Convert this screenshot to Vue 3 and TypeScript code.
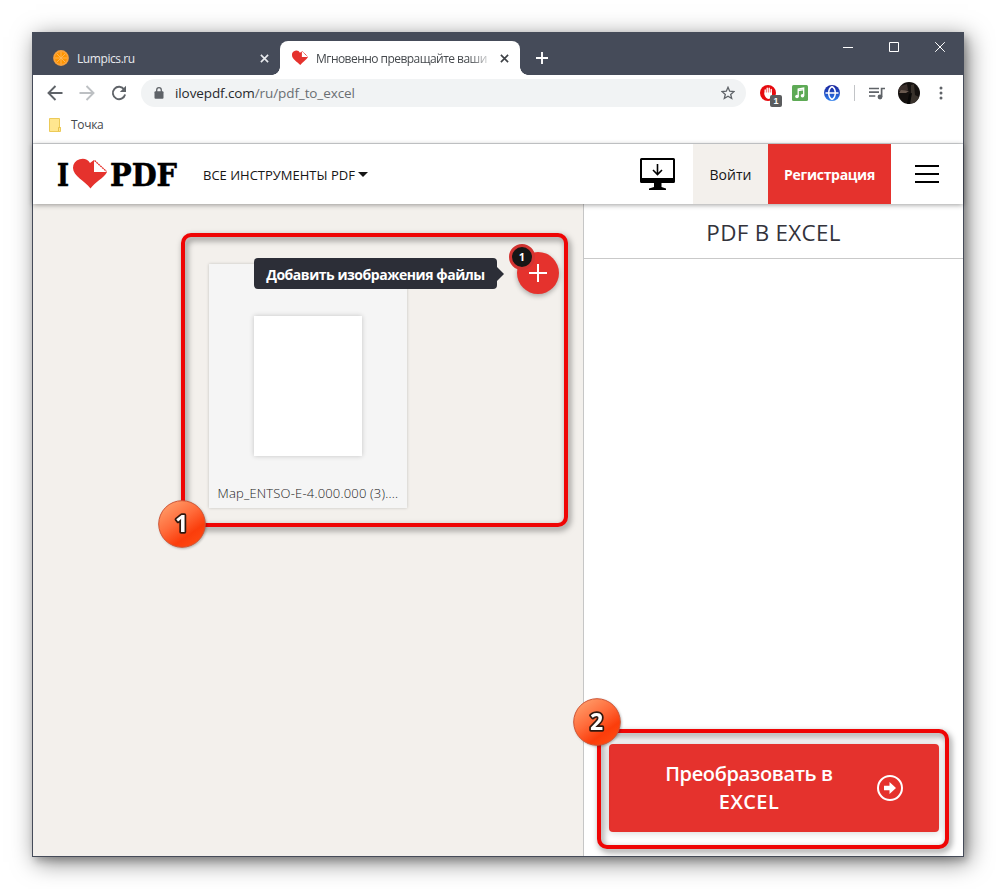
<script setup lang="ts">
interface Tab {
  title: string
  icon: 'orange' | 'heart'
  active: boolean
}

const tabs: Tab[] = [
  { title: 'Lumpics.ru', icon: 'orange', active: false },
  { title: 'Мгновенно превращайте ваши', icon: 'heart', active: true },
]
const spokes: number[] = [0, 45, 90, 135]
const fileName = 'Map_ENTSO-E-4.000.000 (3)....'
const fileCount = 1
</script>

<template>
  <div class="desktop">
    <div class="window">
      <div class="tabstrip">
        <div v-for="tab in tabs" :key="tab.title" class="tab" :class="{ active: tab.active }">
          <svg v-if="tab.icon === 'orange'" class="favicon" viewBox="0 0 16 16">
            <circle cx="8" cy="8" r="7.9" fill="#f9a13a" />
            <circle cx="8" cy="8" r="6.1" fill="#ff9500" />
            <path v-for="s in spokes" :key="s" d="M8 2v12" stroke="#fdb75c" stroke-width=".9" :transform="`rotate(${s} 8 8)`" />
          </svg>
          <svg v-else class="favicon" viewBox="0 0 34 30">
            <path d="M17.500 30C12 23 0 18 0 9A9 9 0 0 1 17 4L21 1V13H34C31 19 22 24 17.500 30Z" fill="#e5322d" />
            <path d="M22 1L33 12" stroke="#e5322d" stroke-width="2" stroke-dasharray="3 1" />
          </svg>
          <span class="tab-title">{{ tab.title }}</span>
          <svg class="tab-close" viewBox="0 0 10 10"><path d="M1 1L9 9M9 1L1 9" /></svg>
        </div>
        <svg class="new-tab" viewBox="0 0 12 12"><path d="M6 0V12M0 6H12" stroke="#fff" stroke-width="1.9" /></svg>
        <div class="win-controls">
          <svg viewBox="0 0 12 12"><path d="M1 6.500H11" /></svg>
          <svg viewBox="0 0 12 12"><path d="M1.500 1.500H10.500V10.500H1.500Z" /></svg>
          <svg viewBox="0 0 12 12"><path d="M1.200 1.200L10.800 10.800M10.800 1.200L1.200 10.800" /></svg>
        </div>
      </div>

      <div class="toolbar">
        <div class="nav">
          <svg viewBox="0 0 16 16"><path d="M15.500 8H2M8.500 1L1.500 8L8.500 15" stroke="#5f6368" /></svg>
          <svg viewBox="0 0 16 16"><path d="M.5 8H14M7.500 1L14.500 8L7.500 15" stroke="#bdc0c3" /></svg>
          <svg viewBox="0 0 16 16">
            <path d="M13.200 4.500A6.200 6.200 0 1 0 14.100 9.500" stroke="#5f6368" />
            <path d="M15 .8V7H8.800Z" fill="#5f6368" />
          </svg>
        </div>
        <div class="omnibox">
          <svg class="lock" viewBox="0 0 10 12">
            <rect x=".5" y="4.300" width="9" height="7.500" rx="1" fill="#5f6368" />
            <path d="M2.700 5V3a2.300 2.300 0 0 1 4.600 0V5" fill="none" stroke="#5f6368" stroke-width="1.300" />
          </svg>
          <span class="url"><b>ilovepdf.com</b>/ru/pdf_to_excel</span>
          <svg class="star" viewBox="0 0 14 14"><path d="M7 1.300L8.700 5.200L13 5.600L9.700 8.400L10.700 12.500L7 10.300L3.300 12.500L4.300 8.400L1 5.600L5.300 5.200Z" /></svg>
        </div>
        <div class="extensions">
          <div class="blocker">
            <svg viewBox="0 0 16 16">
              <circle cx="8" cy="8" r="8" fill="#e60a0e" />
              <path d="M5.200 9V5M7.200 8V3.200M9.200 8V3.200M11.200 8V4.500" stroke="#fff" stroke-width="1.400" stroke-linecap="round" />
              <path d="M4.500 7.500H12V12L9 14C7 14 5.500 12.500 4.500 10Z" fill="#fff" />
            </svg>
            <span class="blocker-count">1</span>
          </div>
          <svg class="note" viewBox="0 0 16 16">
            <rect width="16" height="16" rx="1.500" fill="#5eaa56" />
            <path d="M6.200 11.500V4L11.700 3V10.500M6.200 5.600L11.700 4.600" fill="none" stroke="#fff" stroke-width="1.300" />
            <circle cx="5" cy="11.500" r="1.800" fill="#fff" /><circle cx="10.500" cy="10.700" r="1.800" fill="#fff" />
          </svg>
          <svg class="globe" viewBox="0 0 16 16">
            <defs><linearGradient id="globe" x1="0" y1="0" x2="0" y2="1"><stop stop-color="#17209b" /><stop offset="1" stop-color="#2f80ed" /></linearGradient></defs>
            <circle cx="8" cy="8" r="8" fill="url(#globe)" />
            <path d="M1.500 8H14.500M8 1.500C3.600 4 3.600 12 8 14.500C12.400 12 12.400 4 8 1.500" fill="none" stroke="#fff" stroke-width="1.500" />
          </svg>
          <span class="divider"></span>
          <svg class="queue" viewBox="0 0 16 13">
            <path d="M0 1.500H10M0 5.200H10M0 9H6.300M12.600 10V1.500H16" fill="none" stroke="#5f6368" stroke-width="1.700" />
            <circle cx="11" cy="10" r="2.400" fill="#5f6368" />
          </svg>
          <svg class="avatar" viewBox="0 0 22 22">
            <defs><clipPath id="face"><circle cx="11" cy="11" r="11" /></clipPath></defs>
            <g clip-path="url(#face)">
              <rect width="22" height="22" fill="#15110f" />
              <path d="M0 5L9 2L10 8L5 10L0 9Z" fill="#3b302c" />
              <path d="M13 3L16 2L17 13L21 15V21H10L13 12Z" fill="#39322c" />
              <path d="M3 8L11 9L8 11L1 11Z" fill="#69594f" />
              <path d="M11 12L14 11L12 22H9Z" fill="#080706" />
            </g>
          </svg>
          <svg class="dots" viewBox="0 0 4 14"><circle cx="2" cy="2" r="1.500" /><circle cx="2" cy="7" r="1.500" /><circle cx="2" cy="12" r="1.500" /></svg>
        </div>
      </div>

      <div class="bookmarks">
        <svg viewBox="0 0 12 14">
          <path d="M.5 .5H10.500V9.500H11.500V13.500H.5Z" fill="#ffe68f" stroke="#ecca58" />
          <path d="M9.500 13V9.500H11.500" fill="none" stroke="#e8c34a" />
        </svg>
        <span>Точка</span>
      </div>

      <header class="site-header">
        <svg class="logo" viewBox="0 0 121 40">
          <text x="0" y="32" textLength="12" lengthAdjust="spacingAndGlyphs">I</text>
          <path d="M33.500 34.500C28 27 16 22 16 14A9.300 9.300 0 0 1 33 9L37 6V18H50C47 24 38 28 33.500 34.500Z" fill="#e5322d" />
          <path d="M37.500 6.500V17.500H49Z" fill="#fff" />
          <path d="M37.500 6.500L49.500 17.500" stroke="#e5322d" stroke-width="1.300" stroke-dasharray="2 .6" />
          <text x="53" y="32" textLength="67" lengthAdjust="spacingAndGlyphs">PDF</text>
        </svg>
        <span class="tools">ВСЕ ИНСТРУМЕНТЫ PDF</span>
        <span class="caret"></span>
        <svg class="monitor" viewBox="0 0 35 32">
          <path fill-rule="evenodd" d="M1.500 0H33.500Q35 0 35 1.500V23.500Q35 25 33.500 25H21.500V29L26 30.500V32H9V30.500L14 29V25H1.500Q0 25 0 23.500V1.500Q0 0 1.500 0ZM2 2V20H33V2Z" />
          <path d="M17.500 6V16M13 12L17.500 16.500L22 12" fill="none" stroke="#000" stroke-width="1.600" />
        </svg>
        <button class="login">Войти</button>
        <button class="register">Регистрация</button>
        <svg class="menu" viewBox="0 0 24 18"><path d="M0 1H24M0 9H24M0 17H24" stroke="#000" stroke-width="2" /></svg>
      </header>

      <main class="workspace">
        <section class="files">
          <div class="file-card">
            <div class="page"></div>
            <span class="file-name">{{ fileName }}</span>
          </div>
        </section>
        <aside class="sidebar">
          <h1><span>PDF В EXCEL</span></h1>
          <button class="convert">
            <span class="convert-label"><span>Преобразовать в</span><span>EXCEL</span></span>
            <svg viewBox="0 0 26 26">
              <circle cx="13" cy="13" r="12" fill="none" stroke="#fff" stroke-width="2" />
              <path d="M7 10.800H12.500V7L19 13L12.500 19V15.200H7Z" fill="#fff" />
            </svg>
          </button>
        </aside>
      </main>
    </div>

    <div class="tooltip"><span>Добавить изображения файлы</span></div>
    <div class="add"><svg viewBox="0 0 18 18"><path d="M9 0V18M0 9H18" stroke="#fff" stroke-width="2" /></svg></div>
    <div class="count">{{ fileCount }}</div>
    <div class="frame frame-files"></div>
    <div class="frame frame-convert"></div>
    <svg v-for="n in 2" :key="n" class="marker" :class="`marker-${n}`" viewBox="0 0 50 50">
      <defs>
        <linearGradient :id="`ball${n}`" x1=".1" y1="0" x2=".8" y2="1">
          <stop stop-color="#ffa471" /><stop offset=".45" stop-color="#ff6b3a" /><stop offset=".75" stop-color="#fb3d0b" /><stop offset="1" stop-color="#ff4b12" />
        </linearGradient>
      </defs>
      <circle cx="25" cy="25" r="23.300" :fill="`url(#ball${n})`" stroke="#cf5434" stroke-width="1" />
      <text x="24.500" y="33" text-anchor="middle">{{ n }}</text>
    </svg>
  </div>
</template>

<style>
body { margin: 0; background: #fff; }
</style>

<style scoped>
* { box-sizing: border-box; }
.desktop { position: relative; width: 996px; height: 889px; padding: 32px; overflow: hidden; background: #fff; font-family: "Open Sans", "Noto Sans", sans-serif; }
.window { display: flex; flex-direction: column; width: 932px; height: 825px; border: 1px solid #454b59; background: #fff; box-shadow: 4px 5px 22px rgba(0, 0, 0, .5), 3px 4px 7px rgba(0, 0, 0, .2); }
svg { display: block; flex: none; }
button { border: 0; padding: 0; margin: 0; }

.tabstrip { display: flex; height: 42px; flex: none; padding-left: 7px; background: #454b59; color: #e8eaee; }
.tab { position: relative; display: flex; align-items: center; width: 240px; height: 34px; margin-top: 8px; padding: 0 11px 0 13px; font-size: 12px; }
.tab.active { border-radius: 8px 8px 0 0; background: #fff; color: #45494d; padding-left: 12px; }
.tab.active::before, .tab.active::after { content: ""; position: absolute; bottom: 0; width: 8px; height: 8px; }
.tab.active::before { left: -8px; background: radial-gradient(circle at 0 0, #454b59 7.5px, #fff 8px); }
.tab.active::after { right: -8px; background: radial-gradient(circle at 100% 0, #454b59 7.5px, #fff 8px); }
.favicon { width: 16px; height: 16px; }
.tab-title { flex: 1; margin-left: 8px; overflow: hidden; white-space: nowrap; letter-spacing: -.42px; }
.active .tab-title { flex: none; width: 175px; letter-spacing: -.54px; -webkit-mask-image: linear-gradient(90deg, #000 152px, transparent 178px); }
.tab-close { width: 9px; height: 9px; margin-left: auto; fill: none; stroke: #e8eaee; stroke-width: 1.800; }
.active .tab-close { stroke: #3e4246; }
.new-tab { width: 12px; height: 12px; margin: 19px 0 0 16px; }
.win-controls { display: flex; gap: 34px; margin: 8px 17px 0 auto; }
.win-controls svg { width: 12px; height: 12px; fill: none; stroke: #fff; stroke-width: 1; }

.toolbar { display: flex; align-items: center; height: 36px; flex: none; padding: 0 20px 0 14px; }
.nav { display: flex; gap: 16px; }
.nav svg { width: 16px; height: 16px; fill: none; stroke-width: 1.900; }
.omnibox { display: flex; align-items: center; width: 605px; height: 28px; margin-left: 14px; padding: 0 11px 0 13px; border-radius: 14px; background: #f1f3f4; }
.lock { width: 10px; height: 12px; }
.url { margin-left: 11px; font-size: 13.500px; letter-spacing: -.1px; color: #6a6e72; white-space: nowrap; }
.url b { font-weight: 400; color: #27292c; }
.star { width: 14px; height: 14px; margin-left: auto; fill: none; stroke: #5f6368; stroke-width: 1.300; }
.extensions { display: flex; flex: 1; align-items: center; margin-left: 14px; }
.blocker { position: relative; }
.blocker svg, .note, .globe { width: 16px; height: 16px; }
.blocker-count { position: absolute; left: 10px; top: 10px; width: 12px; height: 12px; border-radius: 2px; background: #5a5c5e; color: #fff; font: bold 9px/12px "Liberation Sans", sans-serif; text-align: center; }
.note, .globe { margin-left: 16px; }
.divider { width: 1px; height: 16px; margin: 0 14px; background: #c2c4c7; }
.queue { width: 16px; height: 13px; }
.avatar { width: 22px; height: 22px; margin-left: 13px; }
.dots { width: 4px; height: 14px; margin-left: auto; fill: #5f6368; }

.bookmarks { display: flex; align-items: center; height: 33px; flex: none; padding: 0 0 5px 16px; border-bottom: 1px solid #d5d7d9; font-size: 12px; letter-spacing: -.3px; color: #45494d; }
.bookmarks svg { width: 12px; height: 14px; margin-right: 10px; }

.site-header { position: relative; z-index: 1; display: flex; align-items: center; height: 60px; flex: none; background: #fff; box-shadow: 0 1px 5px rgba(0, 0, 0, .38); font-family: "Open Sans", sans-serif; }
.logo { width: 121px; height: 40px; margin-left: 24px; overflow: visible; }
.logo text { font: bold 32px "DejaVu Serif", serif; fill: #000; stroke: #000; stroke-width: .6px; }
.tools { margin: 2px 0 0 25px; width: 153px; white-space: nowrap; font-size: 13px; color: #161616; }
.caret { width: 0; margin-left: 2px; border: 5px solid transparent; border-top-color: #161616; border-bottom: 0; }
.monitor { width: 35px; height: 32px; margin-left: auto; }
.login, .register { height: 60px; font-family: inherit; font-size: 14px; }
.login { width: 75px; margin-left: 18px; background: #f3f0ec; color: #161616; font-weight: 500; }
.register { width: 123px; background: #e5322d; color: #fff; font-weight: 700; letter-spacing: -.3px; }
.menu { width: 24px; height: 18px; margin: 0 24px; }

.workspace { display: flex; flex: 1; min-height: 0; }
.files { width: 550px; padding: 60px 0 0 176px; background: #f3f0ec; }
.file-card { display: flex; flex-direction: column; align-items: center; width: 198px; height: 244px; padding-top: 52px; background: #f5f5f5; box-shadow: 0 0 3px rgba(0, 0, 0, .2); }
.page { width: 108px; height: 140px; background: #fff; box-shadow: 0 0 5px rgba(0, 0, 0, .2); }
.file-name { margin-top: 28px; width: 181px; font: 300 13px/18px "Open Sans", sans-serif; letter-spacing: .18px; color: #222; white-space: nowrap; }
.sidebar { display: flex; flex: 1; flex-direction: column; border-left: 1px solid #c6c6c6; background: #fff; }
.sidebar h1 { display: flex; align-items: center; justify-content: center; height: 55px; margin: 0; padding-top: 3px; border-bottom: 1px solid #c9c9c9; font: 400 22.400px "Open Sans", sans-serif; letter-spacing: .3px; color: #33333b; }
.convert { display: flex; align-items: center; width: 330px; height: 88px; margin: auto 0 24px 25px; padding-right: 36px; border-radius: 4px; background: #e5322d; color: #fff; box-shadow: 0 0 9px rgba(0, 0, 0, .2); }
.convert-label { display: flex; flex: 1; flex-direction: column; align-items: center; padding-left: 12px; font: 600 20px/28px "Open Sans", sans-serif; letter-spacing: -.35px; white-space: nowrap; }
.convert-label span:last-child { letter-spacing: .4px; }
.convert svg { width: 26px; height: 26px; }

.tooltip { position: absolute; left: 254px; top: 258px; width: 243px; height: 31px; display: flex; align-items: center; justify-content: center; padding-top: 1px; border-radius: 4px; background: #2c2e37; color: #fff; font: 700 14px "Open Sans", sans-serif; letter-spacing: -.46px; white-space: nowrap; }
.tooltip::after { content: ""; position: absolute; left: 243px; top: 9px; border: 7px solid transparent; border-left-color: #2c2e37; border-right: 0; }
.add { position: absolute; left: 517px; top: 252px; display: flex; align-items: center; justify-content: center; width: 42px; height: 42px; border-radius: 50%; background: #e5322d; box-shadow: 0 2px 5px rgba(0, 0, 0, .3); }
.add svg { width: 18px; height: 18px; }
.count { position: absolute; left: 509px; top: 244px; width: 26px; height: 26px; border: 3px solid #d33432; border-radius: 50%; background: #161616; color: #fff; font: 700 11px/20px "Open Sans", sans-serif; text-align: center; }
.frame { position: absolute; border: 4px solid #ef0505; filter: drop-shadow(2px 3px 3px rgba(0, 0, 0, .5)); }
.frame-files { left: 181px; top: 233px; width: 387px; height: 294px; border-radius: 10px; }
.frame-convert { left: 597px; top: 729px; width: 352px; height: 120px; border-radius: 10px; }
.marker { position: absolute; width: 50px; height: 50px; filter: drop-shadow(1px 1px 1px rgba(0, 0, 0, .25)); }
.marker text { font: bold 23px "Open Sans", sans-serif; fill: #fff; stroke: #30180f; stroke-width: 3.500px; stroke-linejoin: round; paint-order: stroke; }
.marker-1 { left: 156.500px; top: 499px; }
.marker-2 { left: 572px; top: 697px; }
</style>
